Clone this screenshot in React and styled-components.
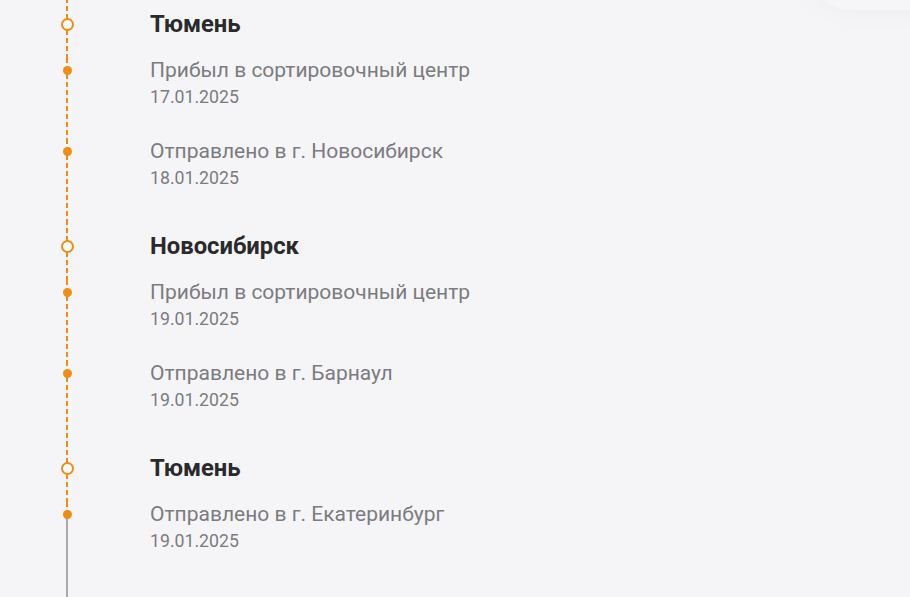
import React from 'react';
import styled, { createGlobalStyle } from 'styled-components';

const GlobalStyle = createGlobalStyle`
  html, body {
    margin: 0;
    padding: 0;
    background: #f5f5f7;
    font-family: Roboto, "Noto Sans", sans-serif;
    overflow: hidden;
  }
`;

const ORANGE = '#f28c13';
const GREY = '#a9a9ad';

const Page = styled.div`
  width: 910px;
  height: 597px;
  overflow: hidden;
  position: relative;
  background: #f5f5f7;
`;

const Shade = styled.div`
  position: absolute;
  top: -70px;
  right: -100px;
  width: 200px;
  height: 80px;
  border-radius: 40px;
  box-shadow: 0 0 30px rgba(0, 0, 0, 0.035);
  background: #f6f6f8;
`;

const List = styled.div`
  display: flex;
  flex-direction: column;
  margin-top: -2px;
`;

const Row = styled.div`
  display: grid;
  grid-template-columns: 150px 1fr;
`;

const Rail = styled.div`
  position: relative;
  ${(p) =>
    p.$tail
      ? `background:
          repeating-linear-gradient(to bottom, ${ORANGE} 0 5px, transparent 5px 8px) 66px 0 / 2px ${p.$split}px no-repeat,
          linear-gradient(${GREY}, ${GREY}) 66px ${p.$split}px / 2px 100% no-repeat;`
      : `background: repeating-linear-gradient(to bottom, ${ORANGE} 0 5px, transparent 5px 8px) 66px 0 / 2px 100% no-repeat;`}
`;

const Ring = styled.span`
  position: absolute;
  left: 60.5px;
  top: ${(p) => p.$y - 6.5}px;
  width: 9px;
  height: 9px;
  border: 2px solid ${ORANGE};
  border-radius: 50%;
  background: #fcfcfd;
`;

const Dot = styled.span`
  position: absolute;
  left: 62.5px;
  top: ${(p) => p.$y - 4.5}px;
  width: 9px;
  height: 9px;
  border-radius: 50%;
  background: ${ORANGE};
`;

const CityBody = styled.div`
  padding: 12px 0 20px;
`;

const City = styled.div`
  font-size: 23.8px;
  line-height: 28px;
  font-weight: 700;
  color: #2a2a2c;
`;

const EventBody = styled.div`
  padding-bottom: ${(p) => (p.$last ? 80 : 31)}px;
`;

const EventText = styled.div`
  font-size: 21px;
  line-height: 24px;
  color: #7b7b80;
`;

const EventDate = styled.div`
  margin-top: 4px;
  font-size: 17.7px;
  line-height: 22px;
  color: #7b7b80;
`;

const stops = [
  {
    city: 'Тюмень',
    events: [
      { text: 'Прибыл в сортировочный центр', date: '17.01.2025' },
      { text: 'Отправлено в г. Новосибирск', date: '18.01.2025' },
    ],
  },
  {
    city: 'Новосибирск',
    events: [
      { text: 'Прибыл в сортировочный центр', date: '19.01.2025' },
      { text: 'Отправлено в г. Барнаул', date: '19.01.2025' },
    ],
  },
  {
    city: 'Тюмень',
    events: [{ text: 'Отправлено в г. Екатеринбург', date: '19.01.2025' }],
  },
];

export default function App() {
  return (
    <>
      <GlobalStyle />
      <Page>
        <Shade />
        <List>
          {stops.map((s, i) => (
            <React.Fragment key={i}>
              <Row>
                <Rail>
                  <Ring $y={26} />
                </Rail>
                <CityBody>
                  <City>{s.city}</City>
                </CityBody>
              </Row>
              {s.events.map((e, j) => {
                const last = i === stops.length - 1 && j === s.events.length - 1;
                return (
                  <Row key={j}>
                    <Rail $tail={last} $split={12}>
                      <Dot $y={12} />
                    </Rail>
                    <EventBody $last={last}>
                      <EventText>{e.text}</EventText>
                      <EventDate>{e.date}</EventDate>
                    </EventBody>
                  </Row>
                );
              })}
            </React.Fragment>
          ))}
        </List>
      </Page>
    </>
  );
}
